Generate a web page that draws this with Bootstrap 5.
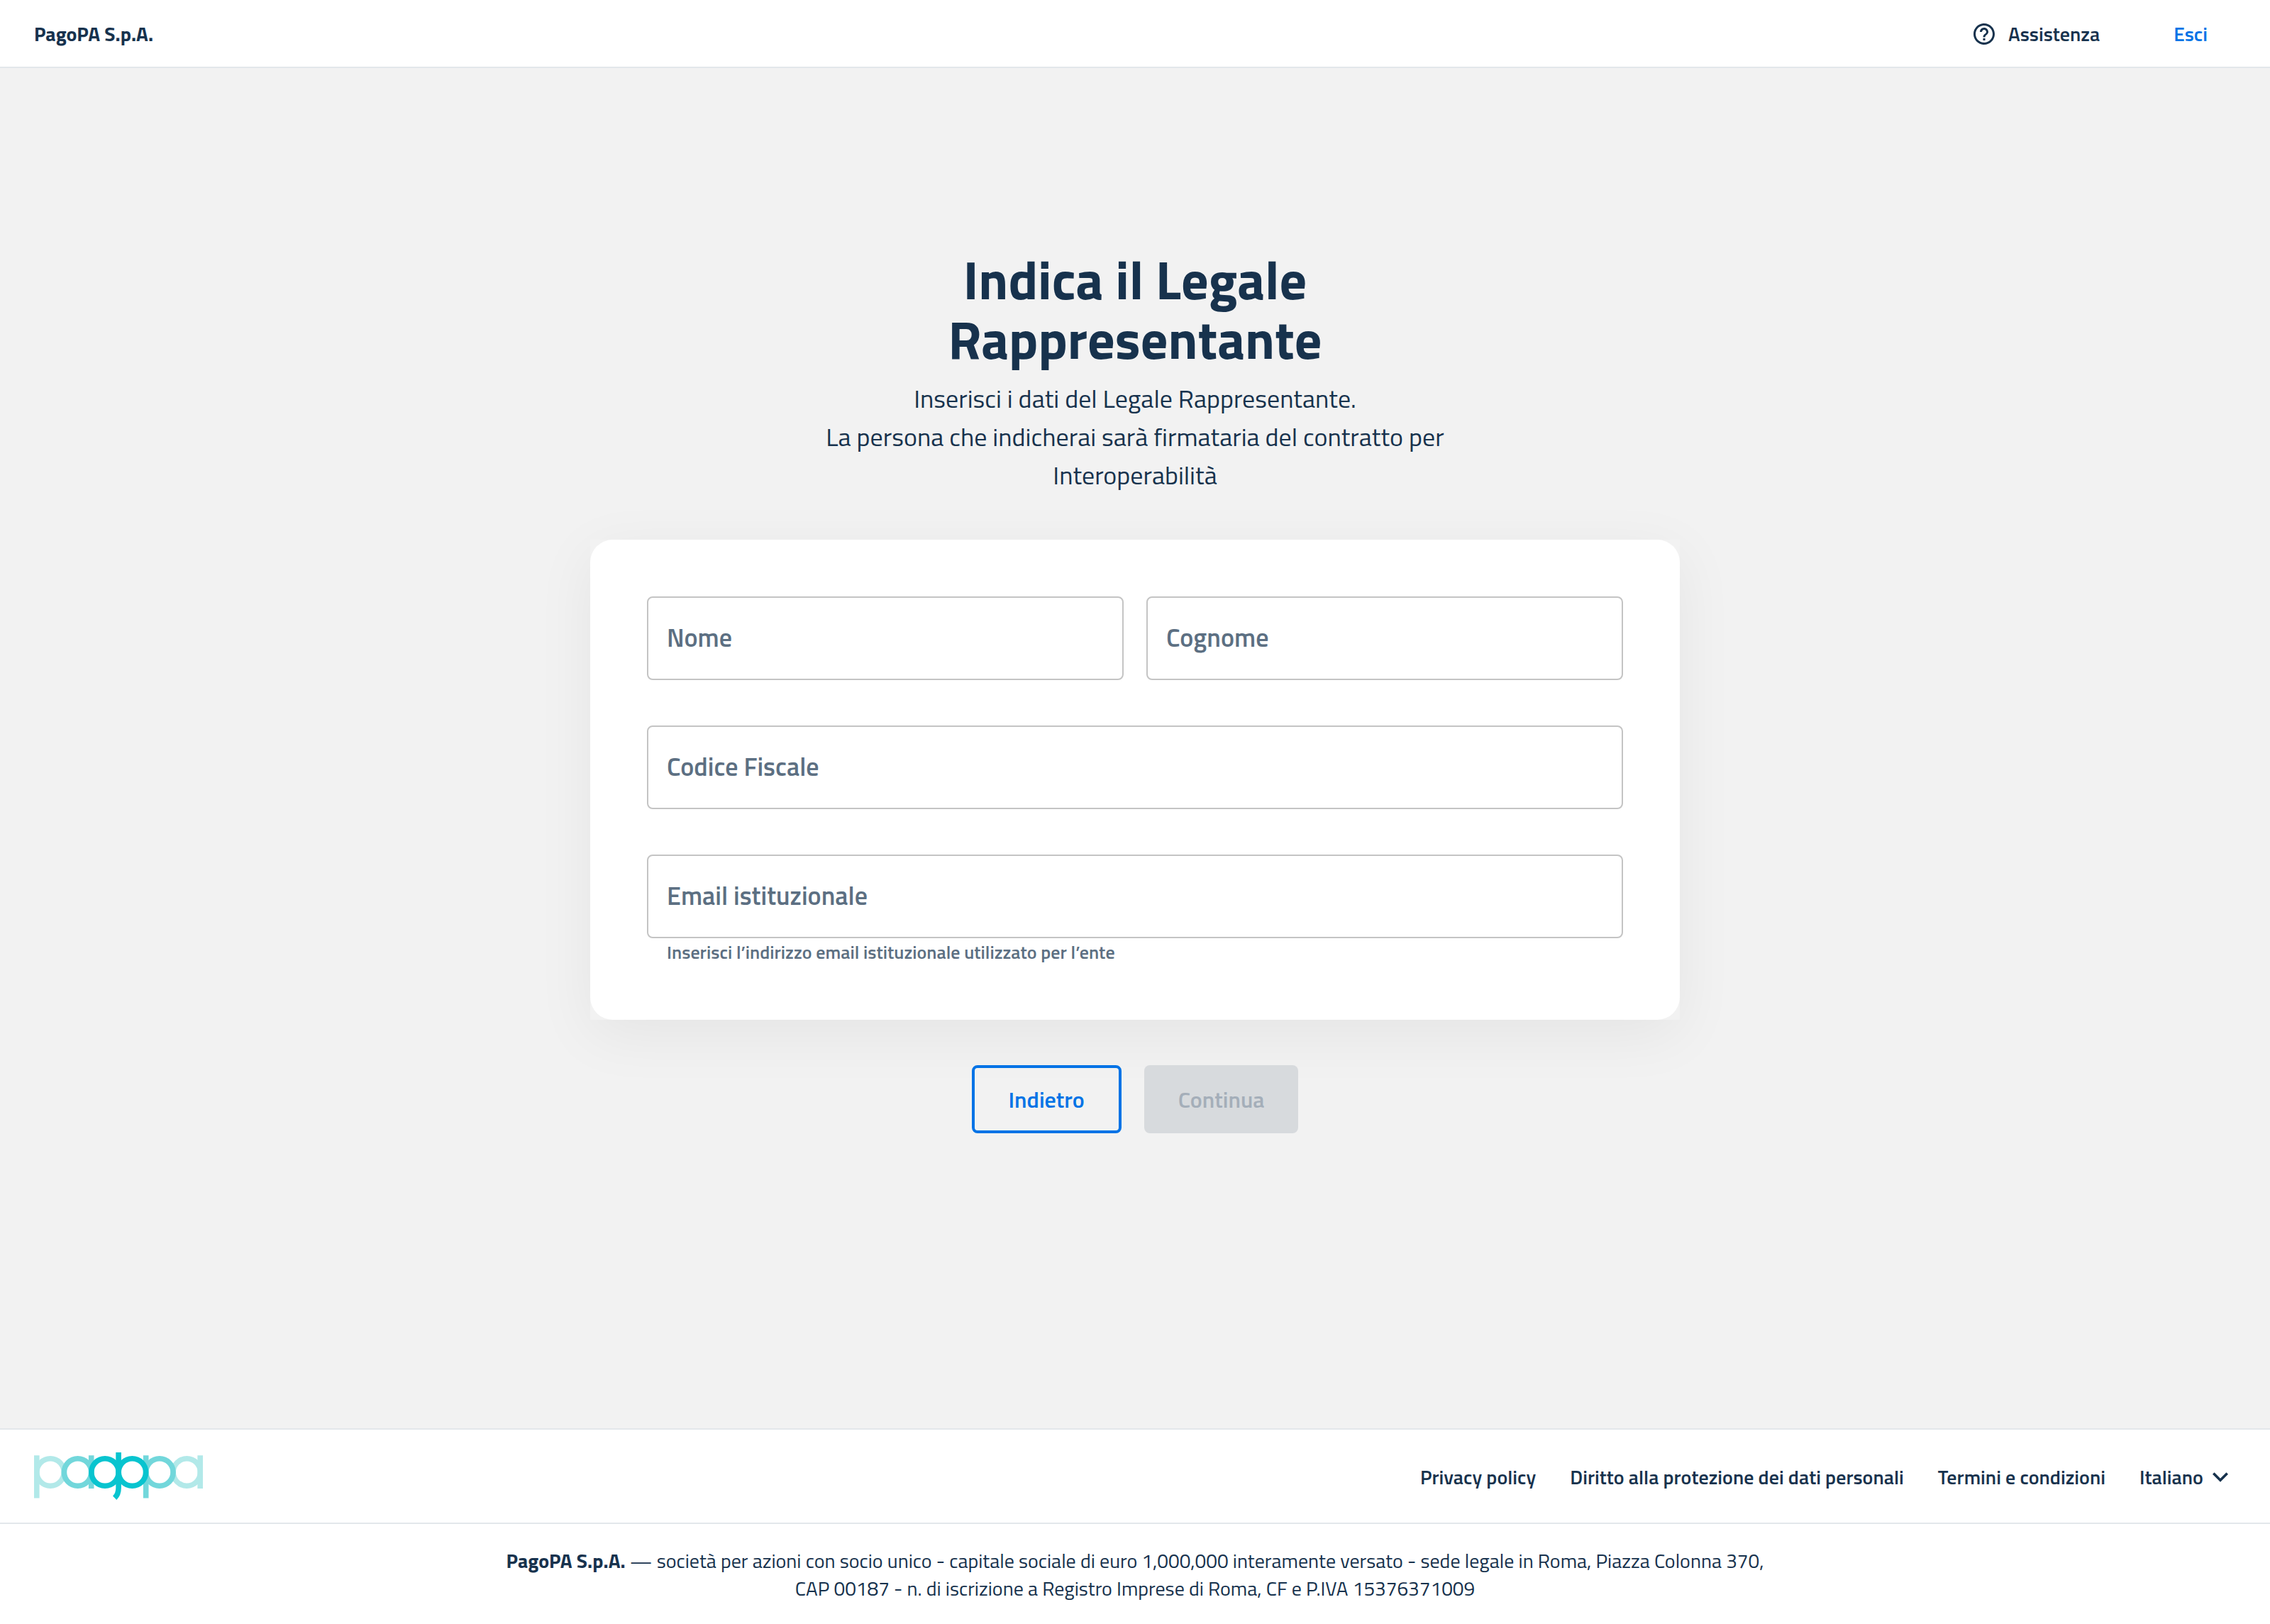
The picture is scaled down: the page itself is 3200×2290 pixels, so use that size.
<!DOCTYPE html>
<html lang="it">
<head>
<meta charset="utf-8">
<meta name="viewport" content="width=device-width, initial-scale=1">
<title>Indica il Legale Rappresentante</title>
<link href="https://cdn.jsdelivr.net/npm/bootstrap@5.3.0/dist/css/bootstrap.min.css" rel="stylesheet">
<style>
  :root { --ink: #17324d; --muted: #5c6f82; --brand: #0073e6; --line: #e3e7eb; --canvas: #f2f2f2; }
  body { font-family: "Titillium Web", Roboto, sans-serif; font-size: 28px; line-height: 39px; color: var(--ink); background: var(--canvas); }
  a { color: inherit; text-decoration: none; }
  .topbar { padding: 28px 88px 27px 48px; border-bottom: 2px solid var(--line); }
  .brand-name { font-weight: 700; }
  .top-actions { gap: 104px; }
  .help-link { gap: 16px; font-weight: 600; }
  .exit-link { color: var(--brand); font-weight: 600; }
  .stage { padding: 256px 48px 80px; }
  .headline { font-size: 76px; line-height: 84px; font-weight: 700; max-width: 640px; margin-bottom: 15px; }
  .intro { font-size: 36px; line-height: 54px; max-width: 900px; margin-bottom: 64px; }
  .panel-wrap { width: 100%; max-width: 1536px; background: var(--canvas); box-shadow: 0 20px 80px rgba(0,0,0,.06); }
  .panel { background: #fff; border-radius: 32px; padding: 80px; }
  .fields { --bs-gutter-x: 32px; --bs-gutter-y: 64px; }
  .form-floating > .form-control { height: 118px; min-height: 118px; padding: 44px 28px 12px; font-size: 36px; line-height: 48px; border: 2px solid #c4c4c4; border-radius: 8px; color: var(--ink); }
  .form-floating > label { height: 116px; display: flex; align-items: center; padding: 0 28px; border: 0; font-size: 36px; line-height: 48px; font-weight: 600; color: var(--muted); }
  .helper { font-size: 26px; line-height: 30px; font-weight: 600; color: var(--muted); padding: 5px 28px 0; }
  .actions { gap: 32px; margin-top: 64px; }
  .actions .btn { font-size: 32px; line-height: 40px; font-weight: 600; height: 96px; padding: 0 48px; border-radius: 8px; }
  .btn-back { color: var(--brand); border: 4px solid var(--brand); }
  .btn-back:hover { color: #fff; background: var(--brand); }
  .actions .btn-next:disabled { color: #a4aeb9; background: #d7dadd; border: 0; opacity: 1; }
  .links-bar { padding: 32px 48px 31px; border-top: 2px solid var(--line); border-bottom: 2px solid var(--line); }
  .foot-links { gap: 48px; font-weight: 600; }
  .lang { appearance: none; border: 0; color: var(--ink); font-weight: 600; padding: 0 46px 0 0; background: url("data:image/svg+xml,%3Csvg xmlns='http://www.w3.org/2000/svg' viewBox='0 0 24 24'%3E%3Cpath fill='%2317324d' d='M7.41 8.59 12 13.17l4.59-4.58L18 10l-6 6-6-6z'/%3E%3C/svg%3E") right center / 44px 44px no-repeat; }
  .legal { padding: 32px 48px 31px; }
  .legal p { max-width: 1800px; }
</style>
</head>
<body class="d-flex flex-column min-vh-100">
<header class="topbar bg-white d-flex justify-content-between align-items-center">
  <a class="brand-name" href="#">PagoPA S.p.A.</a>
  <nav class="top-actions d-flex align-items-center" aria-label="Account">
    <a class="help-link d-flex align-items-center" href="#">
      <svg width="36" height="36" viewBox="0 0 24 24" fill="currentColor" aria-hidden="true"><path d="M11 18h2v-2h-2v2zm1-16C6.48 2 2 6.48 2 12s4.480 10 10 10 10-4.480 10-10S17.520 2 12 2zm0 18c-4.410 0-8-3.590-8-8s3.590-8 8-8 8 3.590 8 8-3.590 8-8 8zm0-14c-2.210 0-4 1.790-4 4h2c0-1.100.9-2 2-2s2 .9 2 2c0 2-3 1.750-3 5h2c0-2.250 3-2.500 3-5 0-2.210-1.790-4-4-4z"/></svg>
      Assistenza
    </a>
    <a class="exit-link" href="#">Esci</a>
  </nav>
</header>

<main class="stage flex-grow-1 d-flex flex-column align-items-center">
  <h1 class="headline text-center">Indica il Legale Rappresentante</h1>
  <p class="intro text-center">Inserisci i dati del Legale Rappresentante.<br>La persona che indicherai sarà firmataria del contratto per Interoperabilità</p>
  <form class="w-100 d-flex flex-column align-items-center">
    <div class="panel-wrap">
      <div class="panel">
        <div class="fields row">
          <div class="col-6"><div class="form-floating">
            <input class="form-control" type="text" id="nome" placeholder=" ">
            <label for="nome">Nome</label>
          </div></div>
          <div class="col-6"><div class="form-floating">
            <input class="form-control" type="text" id="cognome" placeholder=" ">
            <label for="cognome">Cognome</label>
          </div></div>
          <div class="col-12"><div class="form-floating">
            <input class="form-control" type="text" id="cf" placeholder=" ">
            <label for="cf">Codice Fiscale</label>
          </div></div>
          <div class="col-12"><div class="form-floating">
            <input class="form-control" type="email" id="email" placeholder=" " aria-describedby="email-help">
            <label for="email">Email istituzionale</label>
          </div>
          <div class="helper" id="email-help">Inserisci l’indirizzo email istituzionale utilizzato per l’ente</div></div>
        </div>
      </div>
    </div>
    <div class="actions d-flex justify-content-center">
      <button class="btn btn-back" type="button">Indietro</button>
      <button class="btn btn-next" type="submit" disabled>Continua</button>
    </div>
  </form>
</main>

<footer class="bg-white">
  <div class="links-bar d-flex justify-content-between align-items-center">
    <a href="#" aria-label="PagoPA">
      <svg class="d-block" width="238" height="68" viewBox="0 0 238 68" fill="none" stroke-width="7.600" aria-hidden="true">
        <g stroke="#b2e9e9"><path d="M3.800 4.300V64.500M234.200 4.300V51"/><circle cx="23" cy="28" r="19.200"/><circle cx="215.300" cy="28" r="19.200"/></g>
        <g stroke="#72d7db"><path d="M80.700 4.300V51M157.700 4.300V64.500"/><circle cx="61.600" cy="28" r="19.200"/><circle cx="176.900" cy="28" r="19.200"/></g>
        <g stroke="#08c4cf"><circle cx="100" cy="28" r="19.200"/><circle cx="138.400" cy="28" r="19.200"/><path d="M119.100 0V50C119.100 56 117.500 60.500 113.700 64.200"/></g>
      </svg>
    </a>
    <nav class="foot-links d-flex align-items-center" aria-label="Informazioni">
      <a href="#">Privacy policy</a>
      <a href="#">Diritto alla protezione dei dati personali</a>
      <a href="#">Termini e condizioni</a>
      <select class="lang" aria-label="Lingua"><option>Italiano</option></select>
    </nav>
  </div>
  <div class="legal d-flex justify-content-center text-center">
    <p class="mb-0"><strong>PagoPA S.p.A.</strong> — società per azioni con socio unico - capitale sociale di euro 1,000,000 interamente versato - sede legale in Roma, Piazza Colonna 370, CAP 00187 - n. di iscrizione a Registro Imprese di Roma, CF e P.IVA 15376371009</p>
  </div>
</footer>
<script src="https://cdn.jsdelivr.net/npm/bootstrap@5.3.0/dist/js/bootstrap.bundle.min.js"></script>
</body>
</html>
